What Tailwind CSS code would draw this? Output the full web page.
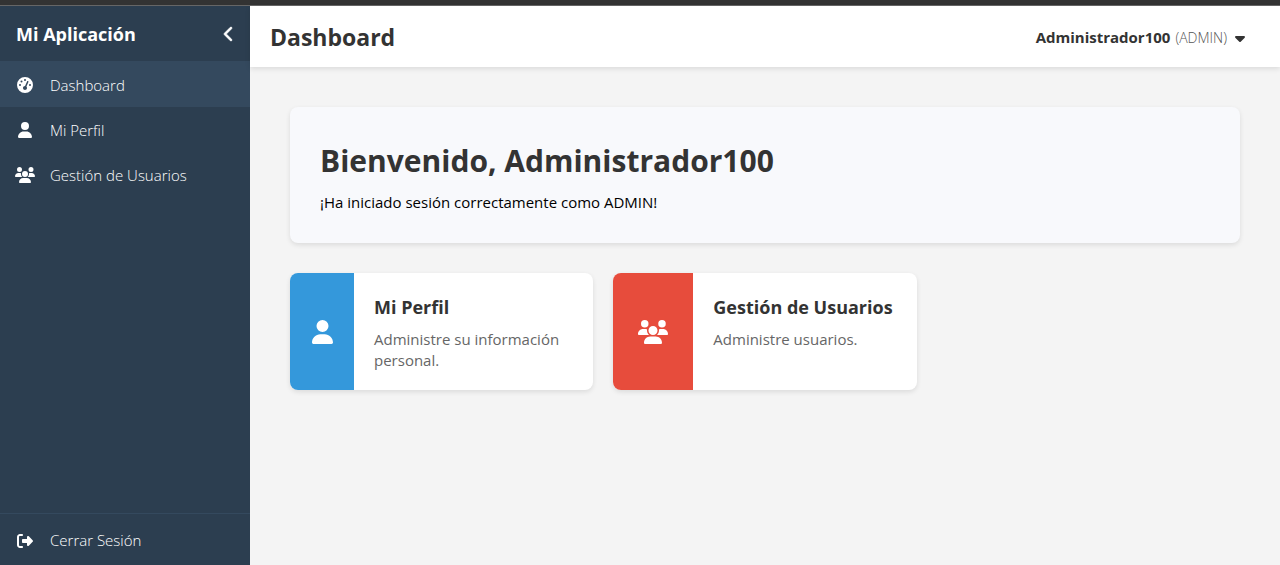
<!DOCTYPE html>
<html lang="es">
<head>
<meta charset="utf-8">
<title>Dashboard</title>
<script src="https://cdn.jsdelivr.net/npm/@tailwindcss/browser@4"></script>
</head>
<body class="flex h-screen flex-col overflow-hidden bg-[#f4f4f4] font-['Open_Sans','Noto_Sans',sans-serif] text-[15px] font-light text-black">
<svg class="hidden" aria-hidden="true">
  <symbol id="gauge" viewBox="0 0 512 512"><path d="M0 256a256 256 0 1 1 512 0A256 256 0 1 1 0 256zM288 96a32 32 0 1 0 -64 0 32 32 0 1 0 64 0zM256 416c35.3 0 64-28.7 64-64c0-17.4-6.9-33.1-18.1-44.6L366 161.7c5.3-12.1-.2-26.3-12.3-31.6s-26.3 .2-31.6 12.3L257.9 288c-.6 0-1.3 0-1.9 0c-35.3 0-64 28.7-64 64s28.7 64 64 64zM176 144a32 32 0 1 0 -64 0 32 32 0 1 0 64 0zM96 288a32 32 0 1 0 0-64 32 32 0 1 0 0 64zm352-32a32 32 0 1 0 -64 0 32 32 0 1 0 64 0z"/></symbol>
  <symbol id="user" viewBox="0 0 448 512"><path d="M224 256A128 128 0 1 0 224 0a128 128 0 1 0 0 256zm-45.7 48C79.8 304 0 383.8 0 482.3C0 498.7 13.3 512 29.7 512l388.6 0c16.4 0 29.7-13.3 29.7-29.7C448 383.8 368.2 304 269.7 304l-91.4 0z"/></symbol>
  <symbol id="users" viewBox="0 0 640 512"><path d="M144 0a80 80 0 1 1 0 160A80 80 0 1 1 144 0zM512 0a80 80 0 1 1 0 160A80 80 0 1 1 512 0zM0 298.7C0 239.8 47.8 192 106.7 192l42.7 0c15.9 0 31 3.5 44.6 9.7c-1.3 7.2-1.9 14.7-1.9 22.3c0 38.2 16.8 72.5 43.3 96c-.2 0-.4 0-.7 0L21.3 320C9.6 320 0 310.4 0 298.7zM405.3 320c-.2 0-.4 0-.7 0c26.6-23.5 43.3-57.8 43.3-96c0-7.6-.7-15-1.9-22.3c13.6-6.3 28.7-9.7 44.6-9.7l42.7 0C592.2 192 640 239.8 640 298.7c0 11.8-9.6 21.3-21.3 21.3l-213.3 0zM224 224a96 96 0 1 1 192 0 96 96 0 1 1 -192 0zM128 485.3C128 411.7 187.7 352 261.3 352l117.3 0C452.3 352 512 411.7 512 485.3c0 14.7-11.9 26.7-26.7 26.7l-330.7 0c-14.7 0-26.7-11.9-26.7-26.7z"/></symbol>
  <symbol id="exit" viewBox="0 0 512 512"><path d="M377.9 105.9L500.7 228.7c7.2 7.2 11.3 17.1 11.3 27.3s-4.1 20.1-11.3 27.3L377.9 406.1c-6.4 6.4-15 9.9-24 9.9c-18.7 0-33.9-15.2-33.9-33.9l0-62.1-128 0c-17.7 0-32-14.3-32-32l0-64c0-17.7 14.3-32 32-32l128 0 0-62.1c0-18.7 15.2-33.9 33.9-33.9c9 0 17.6 3.6 24 9.9zM160 96L96 96c-17.7 0-32 14.3-32 32l0 256c0 17.7 14.3 32 32 32l64 0c17.7 0 32 14.3 32 32s-14.3 32-32 32l-64 0c-53 0-96-43-96-96L0 128C0 75 43 32 96 32l64 0c17.7 0 32 14.3 32 32s-14.3 32-32 32z"/></symbol>
  <symbol id="chevron" viewBox="0 0 320 512"><path d="M9.4 233.4c-12.5 12.5-12.5 32.8 0 45.3l192 192c12.5 12.5 32.8 12.5 45.3 0s12.5-32.8 0-45.3L77.3 256 246.6 86.6c12.5-12.5 12.5-32.8 0-45.3s-32.8-12.5-45.3 0l-192 192z" stroke="currentColor" stroke-width="20"/></symbol>
  <symbol id="caret" viewBox="0 0 320 512"><path d="M137.4 374.6c12.5 12.5 32.8 12.5 45.3 0l128-128c9.2-9.2 11.9-22.9 6.9-34.9s-16.6-19.8-29.6-19.8L32 192c-12.9 0-24.6 7.8-29.6 19.8s-2.2 25.7 6.9 34.9l128 128z"/></symbol>
</svg>
<div class="h-1.5 shrink-0 border-b border-[#666] bg-[#333]"></div>
<div class="flex min-h-0 flex-1">
  <aside class="flex w-[250px] shrink-0 flex-col bg-[#2c3e50] text-white">
    <div class="flex h-14 items-center justify-between border-b border-[#34495e] pr-[15px] pl-4">
      <h2 class="text-lg font-bold">Mi Aplicación</h2>
      <button type="button" aria-label="Contraer menú"><svg class="h-4 w-3 fill-current"><use href="#chevron"/></svg></button>
    </div>
    <nav class="flex flex-1 flex-col leading-6">
      <a href="#" class="flex h-[45px] items-center gap-[15px] bg-[#34495e] px-[15px]"><svg class="h-4 w-5 fill-current"><use href="#gauge"/></svg>Dashboard</a>
      <a href="#" class="flex h-[45px] items-center gap-[15px] px-[15px]"><svg class="h-4 w-5 fill-current"><use href="#user"/></svg>Mi Perfil</a>
      <a href="#" class="flex h-[45px] items-center gap-[15px] px-[15px]"><svg class="h-4 w-5 fill-current"><use href="#users"/></svg>Gestión de Usuarios</a>
    </nav>
    <div class="border-t border-[#34495e]">
      <a href="#" class="flex h-[51px] items-center gap-[15px] px-[15px] pt-0.5"><svg class="h-4 w-5 fill-current"><use href="#exit"/></svg>Cerrar Sesión</a>
    </div>
  </aside>
  <div class="flex min-w-0 flex-1 flex-col">
    <header class="flex h-[61px] shrink-0 items-center justify-between bg-white pr-[34px] pl-5 text-[#333] shadow-[0_2px_5px_rgba(0,0,0,0.1)]">
      <h1 class="pt-0.5 text-[23px] font-bold">Dashboard</h1>
      <button type="button" class="flex items-center gap-[5px] pt-0.5"><span class="font-bold">Administrador100</span><span class="text-sm text-[#555]">(ADMIN)</span><svg class="ml-0.5 h-4 w-3 fill-current"><use href="#caret"/></svg></button>
    </header>
    <main class="flex-1 p-10">
      <section class="rounded-lg bg-[#f8f9fc] p-[30px] shadow-[0_2px_5px_rgba(0,0,0,0.1)]">
        <h2 class="text-[30px] leading-[48px] font-bold text-[#333]">Bienvenido, Administrador100</h2>
        <p class="mt-[6px] leading-[22px] font-normal">¡Ha iniciado sesión correctamente como ADMIN!</p>
      </section>
      <div class="mt-[30px] grid grid-cols-3 gap-5">
        <a href="#" class="flex min-h-[117px] overflow-hidden rounded-lg bg-white shadow-[0_2px_5px_rgba(0,0,0,0.1)]">
          <div class="flex w-16 shrink-0 items-center justify-center bg-[#3498db]"><svg class="h-6 w-[21px] fill-white"><use href="#user"/></svg></div>
          <div class="flex-1 px-5 pt-5 pb-[18px]"><h3 class="text-lg leading-7 font-bold text-[#333]">Mi Perfil</h3><p class="mt-2 leading-[21px] font-normal text-[#666]">Administre su información personal.</p></div>
        </a>
        <a href="#" class="flex min-h-[117px] overflow-hidden rounded-lg bg-white shadow-[0_2px_5px_rgba(0,0,0,0.1)]">
          <div class="flex w-20 shrink-0 items-center justify-center bg-[#e74c3c]"><svg class="h-6 w-[30px] fill-white"><use href="#users"/></svg></div>
          <div class="flex-1 px-5 pt-5 pb-[18px]"><h3 class="text-lg leading-7 font-bold text-[#333]">Gestión de Usuarios</h3><p class="mt-2 leading-[21px] font-normal text-[#666]">Administre usuarios.</p></div>
        </a>
      </div>
    </main>
  </div>
</div>
</body>
</html>
